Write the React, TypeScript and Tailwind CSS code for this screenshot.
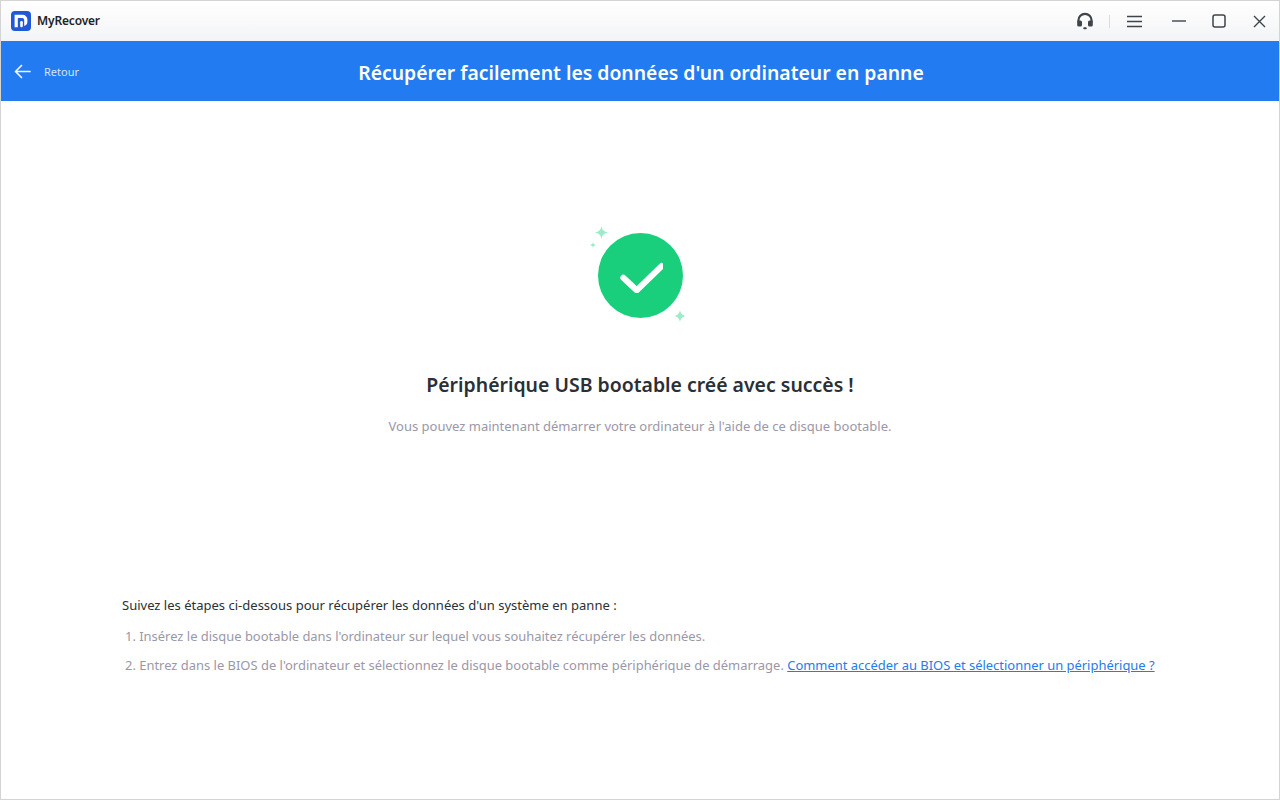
import React from 'react';

function Logo() {
    return (
        <svg width="20" height="20" viewBox="0 0 20 20">
            <rect width="20" height="20" rx="4" fill="#2059d8" />
            <path d="M3.6 3.8h8a4.8 4.8 0 0 1 4.8 4.8v2.2a4.4 4.4 0 0 1-3.2 4.2v-6a2 2 0 0 0-2-2H6.8v9.2H3.6z" fill="#fff" />
            <rect x="9.2" y="10" width="2.6" height="6.2" rx="1.2" fill="#fff" />
        </svg>
    );
}

function Headset() {
    return (
        <svg width="18" height="18" viewBox="0 0 18 18" fill="none">
            <path d="M2.4 10V8.4a6.6 6.6 0 0 1 13.2 0V10" stroke="#3f4449" strokeWidth="2.2" />
            <rect x="1.2" y="8.6" width="4.8" height="6" rx="1.6" fill="#3f4449" />
            <rect x="12" y="8.6" width="4.8" height="6" rx="1.6" fill="#3f4449" />
            <rect x="7.2" y="15.2" width="3.6" height="2" rx="1" fill="#3f4449" />
        </svg>
    );
}

function Sparkle({ size }: { size: number }) {
    return (
        <svg width={size} height={size} viewBox="0 0 12 12">
            <path d="M6 0C6.6 3.4 8.2 5.2 12 6 8.2 6.8 6.6 8.6 6 12 5.4 8.6 3.8 6.8 0 6 3.8 5.2 5.4 3.4 6 0z" fill="#9debc9" />
        </svg>
    );
}

export default function App() {
    return (
        <div className="w-[1280px] h-[800px] flex flex-col border border-[#d4d4d4] bg-white font-['Noto_Sans','Open_Sans',sans-serif] overflow-hidden">
            {/* Title bar */}
            <div className="h-10 shrink-0 flex items-center pl-[10px] bg-gradient-to-b from-white to-[#f3f4f6]">
                <Logo />
                <span className="ml-[6px] text-[12px] font-semibold text-[#1f2329] tracking-[-0.17px]">MyRecover</span>
                <div className="ml-auto flex items-center">
                    <Headset />
                    <div className="ml-[15px] w-px h-[13px] bg-[#dcdcdc]"></div>
                    <svg className="ml-[17px]" width="15" height="13" viewBox="0 0 15 13" stroke="#3f4449" strokeWidth="1.4"><path d="M0 1.5h15M0 6.5h15M0 11.5h15" /></svg>
                    <svg className="ml-[30px]" width="14" height="14" viewBox="0 0 14 14" stroke="#3f4449" strokeWidth="1.4"><path d="M0 7h14" /></svg>
                    <svg className="ml-[26px]" width="14" height="14" viewBox="0 0 14 14" fill="none" stroke="#3f4449" strokeWidth="1.5"><rect x="1" y="1" width="12" height="12" rx="2" /></svg>
                    <svg className="ml-[27px] mr-[13px]" width="13" height="13" viewBox="0 0 13 13" stroke="#3f4449" strokeWidth="1.4"><path d="M1 1l11 11M12 1L1 12" /></svg>
                </div>
            </div>

            {/* Blue header */}
            <div className="relative h-[60px] shrink-0 flex items-center justify-center pt-[4px] pl-[2px] bg-[#227bf0]">
                <div className="absolute left-[13px] top-[22px] flex items-center">
                    <svg width="17" height="17" viewBox="0 0 17 17" fill="none" stroke="#eef5ff" strokeWidth="1.7" strokeLinecap="round" strokeLinejoin="round"><path d="M1.5 8.5h14.5M7.5 2.5l-6 6 6 6" /></svg>
                    <span className="ml-[13px] mt-[1px] text-[11px] text-[#d5e5fc]">Retour</span>
                </div>
                <h1 className="text-[19.37px] font-semibold text-white">Récupérer facilement les données d'un ordinateur en panne</h1>
            </div>

            {/* Success message */}
            <div className="flex flex-col items-center pt-[132px]">
                <div className="relative w-[85px] h-[85px] flex items-center justify-center rounded-full bg-[#19cf7c]">
                    <svg width="46" height="34" viewBox="0 0 46 34" fill="none" stroke="#fff" strokeWidth="6" strokeLinecap="round" strokeLinejoin="round"><path d="M6.3 18.7l13.4 12.6L44.7 7" /></svg>
                    <span className="absolute left-[-3px] top-[-7px] flex"><Sparkle size={13} /></span>
                    <span className="absolute left-[-8px] top-[9px] flex"><Sparkle size={6} /></span>
                    <span className="absolute left-[76px] top-[77px] flex"><Sparkle size={12} /></span>
                </div>
                <h2 className="mt-[53px] text-[19.45px] leading-[28px] font-semibold text-[#2b2f36]">Périphérique USB bootable créé avec succès !</h2>
                <p className="mt-[18px] text-[13px] leading-[18px] text-[#9a98a8]">Vous pouvez maintenant démarrer votre ordinateur à l'aide de ce disque bootable.</p>
            </div>

            {/* Steps */}
            <div className="mt-[161px] pl-[121px] text-[12.94px] leading-[18px]">
                <p className="text-[13.03px] text-[#2b2f36]">Suivez les étapes ci-dessous pour récupérer les données d'un système en panne :</p>
                <ol className="mt-[13px] pl-[3px] flex flex-col gap-[11px] text-[#9a98a8]">
                    <li>1. Insérez le disque bootable dans l'ordinateur sur lequel vous souhaitez récupérer les données.</li>
                    <li>2. Entrez dans le BIOS de l'ordinateur et sélectionnez le disque bootable comme périphérique de démarrage. <a href="#" className="text-[#227bf0] underline">Comment accéder au BIOS et sélectionner un périphérique ?</a></li>
                </ol>
            </div>
        </div>
    );
}
